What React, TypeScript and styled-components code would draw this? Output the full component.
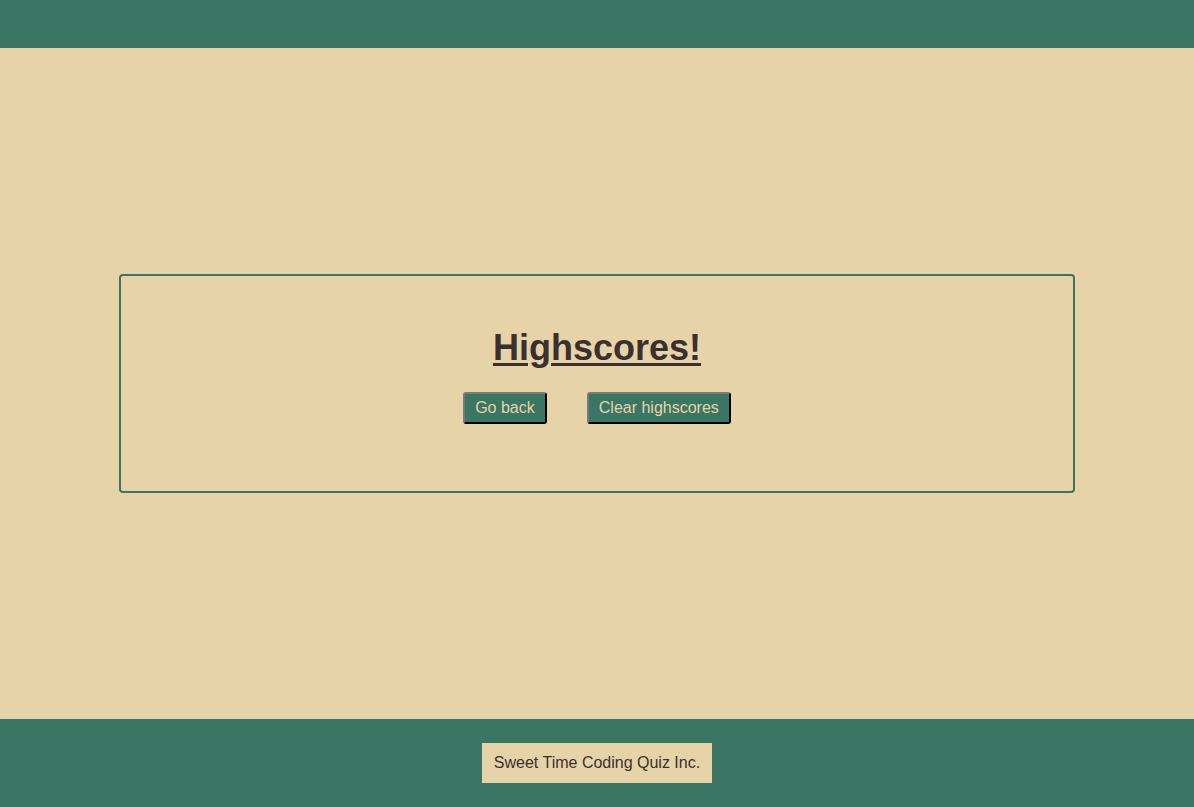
import styled, { createGlobalStyle } from "styled-components";

const GREEN = "#3a7663";
const SAND = "#e7d3a8";
const INK = "#3a3030";

const GlobalStyle = createGlobalStyle`
  html, body {
    margin: 0;
    padding: 0;
    height: 100%;
  }
  body {
    background: ${SAND};
    font-family: "Liberation Sans", Arial, sans-serif;
    color: ${INK};
  }
  #root {
    height: 100%;
  }
`;

const App = () => {
  return (
    <>
      <GlobalStyle />
      <Page>
        <Header />
        <Main>
          <Card>
            <Title>Highscores!</Title>
            <ButtonRow>
              <Button type="button">Go back</Button>
              <Button type="button">Clear highscores</Button>
            </ButtonRow>
          </Card>
        </Main>
        <Footer>
          <FooterTag>Sweet Time Coding Quiz Inc.</FooterTag>
        </Footer>
      </Page>
    </>
  );
};

const Page = styled.div`
  display: flex;
  flex-direction: column;
  height: 807px;
`;

const Header = styled.header`
  height: 48px;
  background: ${GREEN};
  flex-shrink: 0;
`;

const Main = styled.main`
  flex: 1;
  display: flex;
  align-items: center;
  justify-content: center;
  padding: 0 119px;
`;

const Card = styled.section`
  width: 100%;
  box-sizing: border-box;
  height: 219px;
  border: 2px solid ${GREEN};
  border-radius: 4px;
  padding-top: 51px;
  display: flex;
  flex-direction: column;
  align-items: center;
`;

const Title = styled.h1`
  margin: 0;
  font-size: 36px;
  line-height: 41px;
  font-weight: 700;
  text-decoration: underline;
  text-underline-offset: 3px;
  color: ${INK};
`;

const ButtonRow = styled.div`
  display: flex;
  gap: 40px;
  margin-top: 24px;
`;

const Button = styled.button`
  font-family: "Liberation Sans", Arial, sans-serif;
  font-size: 16px;
  line-height: 18px;
  padding: 5px 10px;
  background: ${GREEN};
  color: ${SAND};
  border: 2px outset #5a5a5a;
  border-radius: 3px;
  border-color: #7a7a7a #222 #222 #7a7a7a;
  cursor: pointer;
`;

const Footer = styled.footer`
  height: 88px;
  flex-shrink: 0;
  background: ${GREEN};
  display: flex;
  align-items: center;
  justify-content: center;
`;

const FooterTag = styled.div`
  background: ${SAND};
  color: ${INK};
  font-size: 16px;
  line-height: 18px;
  padding: 11px 12px;
`;

export default App;
